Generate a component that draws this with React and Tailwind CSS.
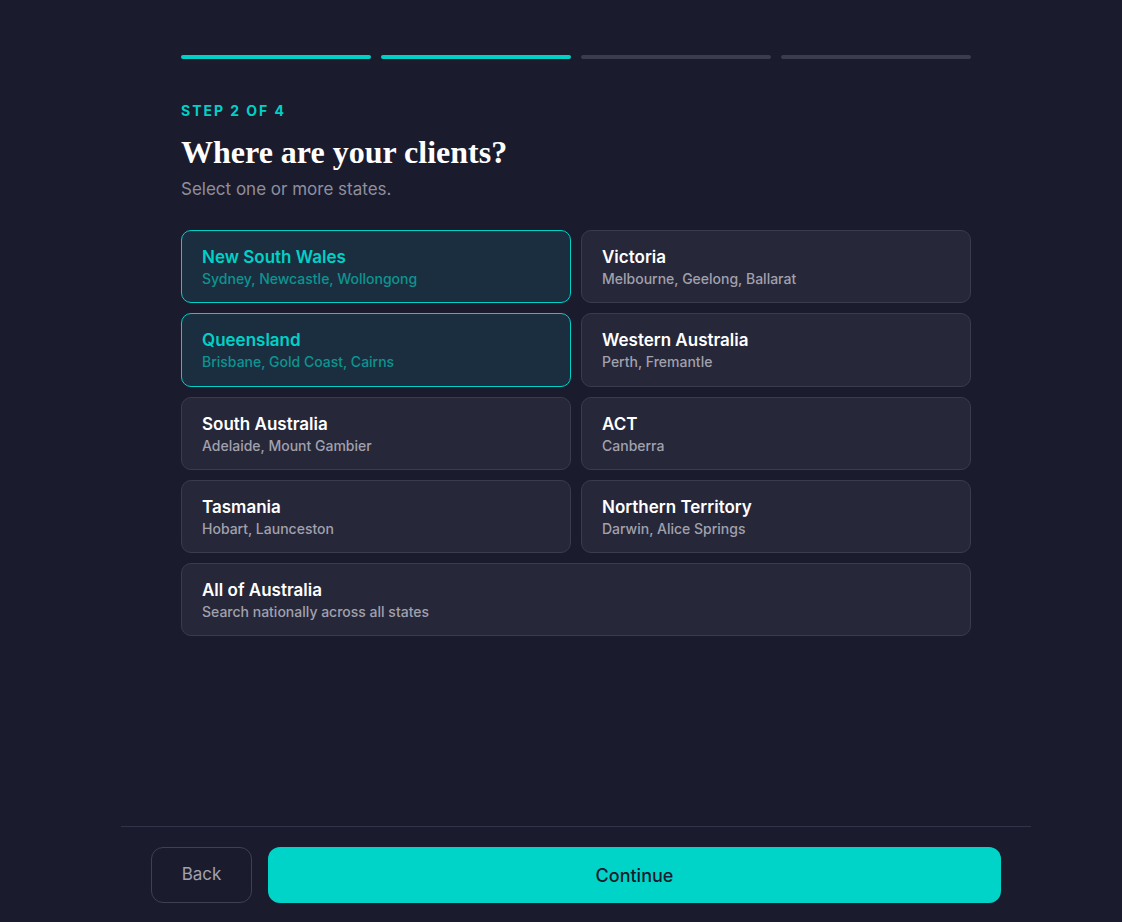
import React from "react";

const states = [
  { name: "New South Wales", cities: "Sydney, Newcastle, Wollongong", sel: true },
  { name: "Victoria", cities: "Melbourne, Geelong, Ballarat" },
  { name: "Queensland", cities: "Brisbane, Gold Coast, Cairns", sel: true },
  { name: "Western Australia", cities: "Perth, Fremantle" },
  { name: "South Australia", cities: "Adelaide, Mount Gambier" },
  { name: "ACT", cities: "Canberra" },
  { name: "Tasmania", cities: "Hobart, Launceston" },
  { name: "Northern Territory", cities: "Darwin, Alice Springs" },
];

function Card({ s, wide }) {
  return (
    <button
      className={
        "h-[73.25px] rounded-[10px] border px-5 pt-[15px] text-left flex flex-col justify-start " +
        (wide ? "col-span-2 " : "") +
        (s.sel
          ? "border-[#00d1c7] bg-[#1b2e40]"
          : "border-[#3a3b4f] bg-[#262739]")
      }
    >
      <div
        className={
          "text-[17px] font-semibold leading-[22px] " +
          (s.sel ? "text-[#00d1c7]" : "text-white")
        }
      >
        {s.name}
      </div>
      <div
        className={
          "mt-[1px] text-[14px] font-medium leading-[20px] " +
          (s.sel ? "text-[#0d948f]" : "text-[#a1a1ad]")
        }
      >
        {s.cities}
      </div>
    </button>
  );
}

export default function App() {
  return (
    <div
      className="h-screen w-full bg-[#1b1b2e] flex flex-col pl-[30px]"
      style={{ fontFamily: "Inter, 'Noto Sans', sans-serif" }}
    >
      <div className="flex-1 flex justify-center">
        <div className="w-[790px] pt-[55px]">
          <div className="grid grid-cols-4 gap-[10px]">
            <div className="h-1 rounded-full bg-[#00d1c7]" />
            <div className="h-1 rounded-full bg-[#00d1c7]" />
            <div className="h-1 rounded-full bg-[#3b3c4e]" />
            <div className="h-1 rounded-full bg-[#3b3c4e]" />
          </div>
          <div className="mt-[42px] text-[14px] font-bold tracking-[0.14em] text-[#00d1c7] leading-[20px]">
            STEP 2 OF 4
          </div>
          <h1
            className="mt-[12px] text-[32px] font-bold text-white leading-[38px]"
            style={{ fontFamily: "'Liberation Serif', 'DejaVu Serif', serif" }}
          >
            Where are your clients?
          </h1>
          <p className="mt-[7px] text-[17px] text-[#8f8f9c] leading-[22px]">
            Select one or more states.
          </p>
          <div className="mt-[30px] grid grid-cols-2 gap-[10px]">
            {states.map((s) => (
              <Card key={s.name} s={s} />
            ))}
            <Card
              wide
              s={{ name: "All of Australia", cities: "Search nationally across all states" }}
            />
          </div>
        </div>
      </div>
      <div className="flex justify-center">
        <div className="w-[910px] border-t border-[#33344a] px-[30px] pt-[20px] pb-[19px] flex gap-4">
          <button className="w-[101px] h-[56px] rounded-[12px] border border-[#3f4054] text-[17px] text-[#a1a1ad]">
            Back
          </button>
          <button className="flex-1 h-[56px] rounded-[12px] bg-[#00d4c8] text-[18px] font-medium text-[#1b1b2e]">
            Continue
          </button>
        </div>
      </div>
    </div>
  );
}
